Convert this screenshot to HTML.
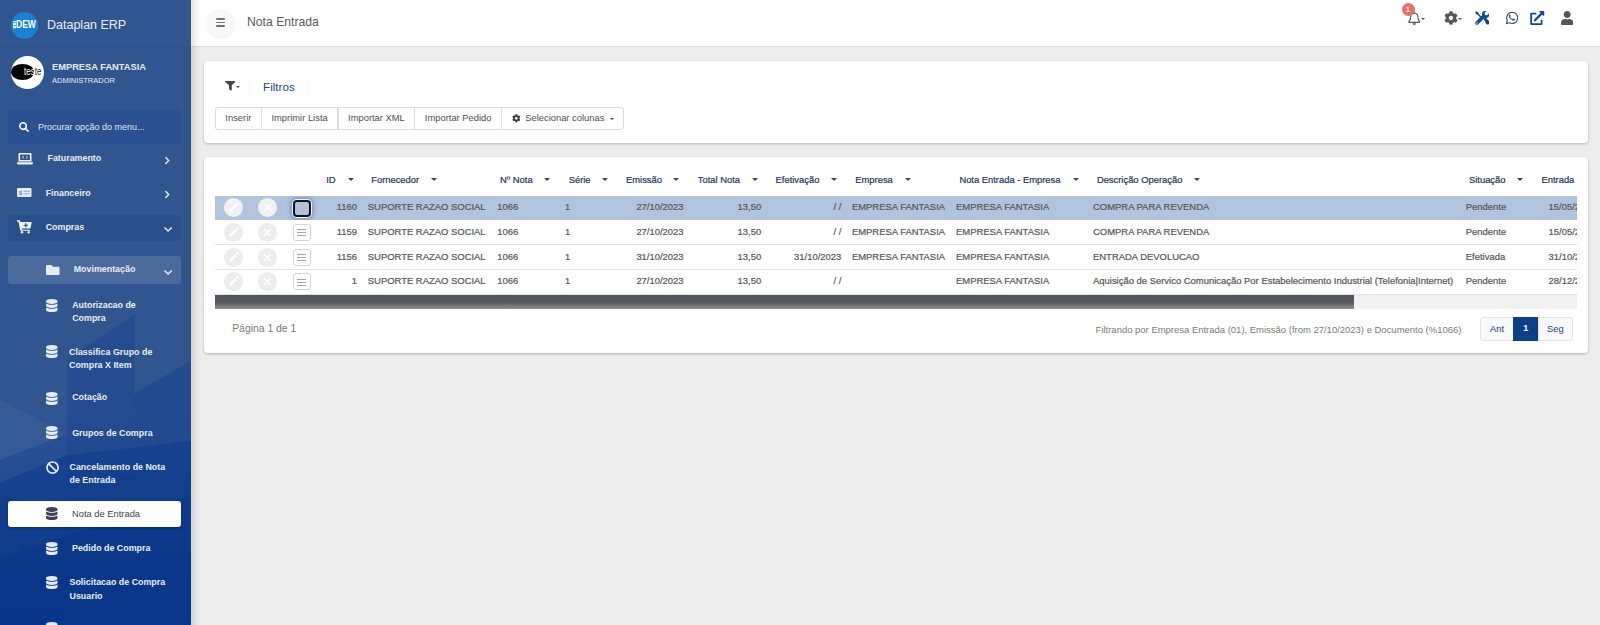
<!DOCTYPE html>
<html lang="pt-BR">
<head>
<meta charset="utf-8">
<title>Nota Entrada</title>
<style>
*{box-sizing:border-box;margin:0;padding:0}
html,body{width:1600px;height:625px;overflow:hidden;background:#ededed;font-family:"Liberation Sans",Arial,sans-serif;}
body{position:relative}
.abs{position:absolute}
#side{position:absolute;left:0;top:0;width:191px;height:625px;overflow:hidden;
 background:linear-gradient(180deg,#31568f 0%,#31568f 64%,#2c5395 74%,#1c4890 84%,#0d3b8b 94%,#09368a 100%);
 z-index:5;color:#eef2f8}
#sideshadow{position:absolute;left:191px;top:0;width:11px;height:625px;background:linear-gradient(90deg,rgba(0,0,0,.11),rgba(0,0,0,.04) 45%,rgba(0,0,0,0));z-index:6}
#side svg.bgshape{position:absolute;left:0;top:0;width:191px;height:625px}
#side .divider{position:absolute;left:0;top:46px;width:191px;height:1px;background:rgba(20,45,95,.16)}
.logo{position:absolute;left:11px;top:11.500px;width:27px;height:27px;border-radius:50%;background:#1b7fd4}
.logo span{position:absolute;left:5.200px;top:7.300px;font-size:10.300px;font-weight:bold;color:#fff;line-height:12px;transform:scaleX(.83);transform-origin:0 50%}
.logo i{position:absolute;left:1.500px;top:9.600px;width:3.600px;height:7.600px;background:repeating-linear-gradient(180deg,rgba(255,255,255,.95) 0 1px,rgba(255,255,255,.25) 1px 1.520px)}
.brand{position:absolute;left:47px;top:16px;font-size:12.500px;line-height:18px;color:#e8edf6;white-space:nowrap}
.avatar{position:absolute;left:11px;top:56px;width:33px;height:33px;border-radius:50%;background:#fff;overflow:hidden}
.avatar b{position:absolute;left:.2px;top:7.700px;width:23.300px;height:16.400px;border-radius:50%;background:#050505}
.avatar span{position:absolute;left:12.500px;top:10px;font-size:10px;line-height:12px;font-weight:normal;color:#fff;transform:scaleX(.8);transform-origin:0 50%}
.avatar span em{font-style:normal;color:#222}
.uname{position:absolute;left:52px;top:61px;font-size:9.300px;font-weight:bold;line-height:12px;color:#e6ebf4}
.urole{position:absolute;left:52px;top:74.500px;font-size:7.500px;line-height:11px;color:#e6ebf4}
.search{position:absolute;left:8px;top:110px;width:173px;height:34px;background:#2a5090;border-radius:3px}
.search span{position:absolute;left:30px;top:11px;font-size:9px;line-height:12px;color:#dfe6f1}
.mbg{position:absolute;left:8px;width:173px;border-radius:3px}
.t{position:absolute;font-size:8.900px;font-weight:bold;line-height:13.300px;color:#e9edf5;white-space:nowrap}
#top{position:absolute;left:191px;top:0;width:1409px;height:47px;background:#fff;border-bottom:1px solid #e0e0e0}
.hamb{position:absolute;left:16px;top:8.500px;width:28px;height:28px;border-radius:50%;background:#f8f8f8;box-shadow:0 1px 2px rgba(0,0,0,.08)}
.hamb i{position:absolute;left:9px;width:9px;height:1.800px;background:#707070;border-radius:1px}
.ptitle{position:absolute;left:56px;top:14px;font-size:12.200px;line-height:16px;color:#5a5a5a}
.card{position:absolute;left:204px;width:1384px;background:#fff;border-radius:4px;box-shadow:0 1px 3px rgba(0,0,0,.25)}
.btn{position:absolute;top:107px;height:22.500px;border:1px solid #dcdcdc;background:#fff;font-size:9.400px;line-height:20px;color:#4f4f4f;text-align:center;white-space:nowrap}
.th{position:absolute;top:172.600px;font-size:9.400px;line-height:13px;color:#1c3460;white-space:nowrap;-webkit-text-stroke:.2px #1c3460}
.ar{position:absolute;top:177.500px;width:0;height:0;border-left:3px solid transparent;border-right:3px solid transparent;border-top:3.500px solid #3a4558}
.row{position:absolute;left:215px;width:1361.500px;overflow:hidden}
.row.sel{background:#b0c4de}
.ln{position:absolute;left:215px;width:1361.500px;height:1px;background:#e4e4e4}
.c{position:absolute;top:5px;font-size:9.450px;line-height:13px;color:#585858;white-space:nowrap;-webkit-text-stroke:.22px #585858}
.circ{position:absolute;top:2.500px;width:19px;height:19px;border-radius:50%;background:#ececec}
.row.sel .circ{background:#f1f1f1}
.lst{position:absolute;left:77.500px;top:3.500px;width:18px;height:17px;border:1px solid #d4d4d4;border-radius:3px;background:#fff}
.lst i{position:absolute;left:3.500px;width:9px;height:1px;background:#a5a5a5}
.row.sel .lst{top:4.300px;border:2px solid #10131a;background:#b4c1d6;box-shadow:0 0 0 1px #f4f6fa,0 0 4px 2px rgba(40,70,130,.45);border-radius:4px}
.row.sel .lst i{display:none}
.pg{position:absolute;top:317px;height:24px;font-size:9.400px;line-height:21px;text-align:center;color:#1c3c6e;background:#f8f9fa;border:1px solid #e1e4e8}
</style>
</head>
<body>
<div id="side">
<svg class="bgshape" viewBox="0 0 191 625" preserveAspectRatio="none">
<polygon points="67,359 134.500,315 134.500,625 67,625" fill="#123f8c" opacity=".42"/>
<polygon points="134.500,393 191,361 191,625 134.500,625" fill="#123f8c" opacity=".45"/>
<polygon points="0,400 67,434.500 0,460" fill="#fff" opacity=".035"/>
<polygon points="0,460 67,434.500 67,625 0,625" fill="#123f8c" opacity=".22"/>
<polygon points="0,483 67,455 191,441 191,625 0,625" fill="#0b398a" opacity=".55"/>
<polygon points="0,558 191,495 191,625 0,625" fill="#08358a" opacity=".45"/>
</svg>
<div class="logo"><i></i><span>DEW</span></div>
<div class="brand">Dataplan ERP</div><div class="divider"></div>
<div class="avatar"><b></b><span>tes<em>te</em></span></div>
<div class="uname">EMPRESA FANTASIA</div><div class="urole">ADMINISTRADOR</div>
<div class="search"><svg class="abs" style="left:10.5px;top:12px;width:10px;height:10px" viewBox="0 0 512 512" preserveAspectRatio="xMidYMid meet"><path fill="#fff" d="M505 442.7L405.3 343c-4.500-4.500-10.600-7-17-7H372c27.600-35.300 44-79.700 44-128C416 93.100 322.900 0 208 0S0 93.100 0 208s93.100 208 208 208c48.300 0 92.700-16.400 128-44v16.300c0 6.400 2.500 12.500 7 17l99.700 99.700c9.400 9.400 24.600 9.400 33.900 0l28.300-28.300c9.400-9.400 9.400-24.600.1-34zM208 336c-70.700 0-128-57.200-128-128 0-70.700 57.200-128 128-128 70.700 0 128 57.200 128 128 0 70.700-57.200 128-128 128z"/></svg><span>Procurar opção do menu...</span></div>
<div class="mbg" style="top:215px;height:26px;background:rgba(20,60,130,.23)"></div>
<div class="mbg" style="top:256px;height:28px;background:rgba(255,255,255,.13)"></div>
<div class="mbg" style="top:501px;height:26px;background:#fff;box-shadow:0 1px 3px rgba(0,0,0,.3)"></div>
<svg class="abs" style="left:17px;top:152.500px;width:16px;height:12px" viewBox="0 0 16 12"><path fill="#eef2f8" d="M2.500 0h11c.6 0 1 .4 1 1v7.500h-13V1c0-.6.4-1 1-1zm.6 1.600v5.300h9.800V1.600zM0 9.300h16v.7c0 .8-.7 1.500-1.500 1.500h-13C.7 11.500 0 10.800 0 10z"/><path fill="none" stroke="#eef2f8" stroke-width=".9" d="M6.800 3l-1.300 1.300 1.300 1.300M9.200 3l1.300 1.300-1.300 1.300"/></svg>
<div class="t" style="left:47.5px;top:151.9px;">Faturamento</div>
<svg class="abs" style="left:164.2px;top:155.7px;width:6.5px;height:9px" viewBox="0 0 320 512" preserveAspectRatio="xMidYMid meet"><path fill="#e6ebf3" d="M285.476 272.971L91.132 467.314c-9.373 9.373-24.569 9.373-33.941 0l-22.667-22.667c-9.357-9.357-9.375-24.522-.04-33.901L188.505 256 34.484 101.255c-9.335-9.379-9.317-24.544.04-33.901l22.667-22.667c9.373-9.373 24.569-9.373 33.941 0L285.475 239.03c9.373 9.372 9.373 24.568.001 33.941z"/></svg>
<svg class="abs" style="left:17px;top:188px;width:14.500px;height:9.200px" viewBox="0 0 14.500 9.200"><rect x="0" y="0" width="14.500" height="9.200" rx="1.200" fill="#e6ebf3"/><text x="1.800" y="6.900" font-size="6.200" font-weight="bold" font-family="Liberation Sans, sans-serif" fill="#6d86b3">$</text><rect x="6.500" y="2.800" width="6.500" height=".9" fill="#8fa3c6"/><rect x="6.500" y="5.300" width="6.500" height=".9" fill="#8fa3c6"/></svg>
<div class="t" style="left:45.7px;top:186.9px;">Financeiro</div>
<svg class="abs" style="left:164.2px;top:189.7px;width:6.5px;height:9px" viewBox="0 0 320 512" preserveAspectRatio="xMidYMid meet"><path fill="#e6ebf3" d="M285.476 272.971L91.132 467.314c-9.373 9.373-24.569 9.373-33.941 0l-22.667-22.667c-9.357-9.357-9.375-24.522-.04-33.901L188.505 256 34.484 101.255c-9.335-9.379-9.317-24.544.04-33.901l22.667-22.667c9.373-9.373 24.569-9.373 33.941 0L285.475 239.03c9.373 9.372 9.373 24.568.001 33.941z"/></svg>
<svg class="abs" style="left:17px;top:220.300px;width:14.700px;height:13.700px" viewBox="0 0 15.500 14" preserveAspectRatio="none"><path fill="#eef2f8" d="M0 .3h2.600c.4 0 .7.3.8.600L3.600 2h11.200c.5 0 .8.400.7.900l-1.200 5.300c-.1.400-.4.600-.8.600H5l.2 1.100h8c.5 0 .8.400.7.900l-.1.300H4.100c-.4 0-.7-.3-.8-.600L1.600 1.900H0z"/><circle cx="5.300" cy="12.600" r="1.300" fill="#eef2f8"/><circle cx="12.300" cy="12.600" r="1.300" fill="#eef2f8"/><path fill="#2b5091" d="M8.700 3.200h1.300v1.600h1.600v1.200H10v1.600H8.700V6H7.100V4.800h1.600z"/></svg>
<div class="t" style="left:45.7px;top:221.4px;">Compras</div>
<svg class="abs" style="left:163.8px;top:224.2px;width:8.2px;height:10.9px" viewBox="0 0 448 512" preserveAspectRatio="xMidYMid meet"><path fill="#e6ebf3" d="M207.029 381.476L12.686 187.132c-9.373-9.373-9.373-24.569 0-33.941l22.667-22.667c9.357-9.357 24.522-9.375 33.901-.04L224 284.505l154.745-154.021c9.379-9.335 24.544-9.317 33.901.04l22.667 22.667c9.373 9.373 9.373 24.569 0 33.941L240.971 381.476c-9.373 9.372-24.569 9.372-33.942 0z"/></svg>
<svg class="abs" style="left:46px;top:262.5px;width:13.5px;height:14px" viewBox="0 0 512 512" preserveAspectRatio="xMidYMid meet"><path fill="#e6ebf3" d="M464 128H272l-64-64H48C21.49 64 0 85.49 0 112v288c0 26.51 21.49 48 48 48h416c26.51 0 48-21.49 48-48V176c0-26.51-21.49-48-48-48z"/></svg>
<div class="t" style="left:73.7px;top:262.9px;">Movimentação</div>
<svg class="abs" style="left:163.8px;top:266.7px;width:8.2px;height:10.9px" viewBox="0 0 448 512" preserveAspectRatio="xMidYMid meet"><path fill="#e6ebf3" d="M207.029 381.476L12.686 187.132c-9.373-9.373-9.373-24.569 0-33.941l22.667-22.667c9.357-9.357 24.522-9.375 33.901-.04L224 284.505l154.745-154.021c9.379-9.335 24.544-9.317 33.901.04l22.667 22.667c9.373 9.373 9.373 24.569 0 33.941L240.971 381.476c-9.373 9.372-24.569 9.372-33.942 0z"/></svg>
<svg class="abs" style="left:46.2px;top:298.8px;width:11.6px;height:13px" viewBox="0 0 448 512" preserveAspectRatio="xMidYMid meet"><path fill="#e6ebf3" d="M448 73.143v45.714C448 159.143 347.667 192 224 192S0 159.143 0 118.857V73.143C0 32.857 100.333 0 224 0s224 32.857 224 73.143zM448 176v102.857C448 319.143 347.667 352 224 352S0 319.143 0 278.857V176c48.125 33.143 136.208 48.572 224 48.572S399.874 209.143 448 176zm0 160v102.857C448 479.143 347.667 512 224 512S0 479.143 0 438.857V336c48.125 33.143 136.208 48.572 224 48.572S399.874 369.143 448 336z"/></svg>
<div class="t" style="left:72.2px;top:298.5px;">Autorizacao de<br>Compra</div>
<svg class="abs" style="left:46.2px;top:344.5px;width:11.6px;height:13px" viewBox="0 0 448 512" preserveAspectRatio="xMidYMid meet"><path fill="#e6ebf3" d="M448 73.143v45.714C448 159.143 347.667 192 224 192S0 159.143 0 118.857V73.143C0 32.857 100.333 0 224 0s224 32.857 224 73.143zM448 176v102.857C448 319.143 347.667 352 224 352S0 319.143 0 278.857V176c48.125 33.143 136.208 48.572 224 48.572S399.874 209.143 448 176zm0 160v102.857C448 479.143 347.667 512 224 512S0 479.143 0 438.857V336c48.125 33.143 136.208 48.572 224 48.572S399.874 369.143 448 336z"/></svg>
<div class="t" style="left:69px;top:345.6px;">Classifica Grupo de<br>Compra X Item</div>
<svg class="abs" style="left:46.2px;top:391.5px;width:11.6px;height:13px" viewBox="0 0 448 512" preserveAspectRatio="xMidYMid meet"><path fill="#e6ebf3" d="M448 73.143v45.714C448 159.143 347.667 192 224 192S0 159.143 0 118.857V73.143C0 32.857 100.333 0 224 0s224 32.857 224 73.143zM448 176v102.857C448 319.143 347.667 352 224 352S0 319.143 0 278.857V176c48.125 33.143 136.208 48.572 224 48.572S399.874 209.143 448 176zm0 160v102.857C448 479.143 347.667 512 224 512S0 479.143 0 438.857V336c48.125 33.143 136.208 48.572 224 48.572S399.874 369.143 448 336z"/></svg>
<div class="t" style="left:72.2px;top:391.4px;">Cotação</div>
<svg class="abs" style="left:46.2px;top:426.40000000000003px;width:11.6px;height:13px" viewBox="0 0 448 512" preserveAspectRatio="xMidYMid meet"><path fill="#e6ebf3" d="M448 73.143v45.714C448 159.143 347.667 192 224 192S0 159.143 0 118.857V73.143C0 32.857 100.333 0 224 0s224 32.857 224 73.143zM448 176v102.857C448 319.143 347.667 352 224 352S0 319.143 0 278.857V176c48.125 33.143 136.208 48.572 224 48.572S399.874 209.143 448 176zm0 160v102.857C448 479.143 347.667 512 224 512S0 479.143 0 438.857V336c48.125 33.143 136.208 48.572 224 48.572S399.874 369.143 448 336z"/></svg>
<div class="t" style="left:72.2px;top:426.5px;">Grupos de Compra</div>
<svg class="abs" style="left:45.9px;top:460.6px;width:13.2px;height:13.2px" viewBox="0 0 512 512" preserveAspectRatio="xMidYMid meet"><path fill="#e6ebf3" d="M256 8C119.034 8 8 119.033 8 256s111.034 248 248 248 248-111.034 248-248S392.967 8 256 8zm130.108 117.892c65.448 65.448 70 165.481 20.677 235.637L150.47 105.216c70.204-49.356 170.226-44.735 235.638 20.676zM125.892 386.108c-65.448-65.448-70-165.481-20.677-235.637L361.53 406.784c-70.203 49.356-170.226 44.736-235.638-20.676z"/></svg>
<div class="t" style="left:69.5px;top:460.5px;">Cancelamento de Nota<br>de Entrada</div>
<svg class="abs" style="left:46.2px;top:507.2px;width:11.6px;height:13px" viewBox="0 0 448 512" preserveAspectRatio="xMidYMid meet"><path fill="#3a4253" d="M448 73.143v45.714C448 159.143 347.667 192 224 192S0 159.143 0 118.857V73.143C0 32.857 100.333 0 224 0s224 32.857 224 73.143zM448 176v102.857C448 319.143 347.667 352 224 352S0 319.143 0 278.857V176c48.125 33.143 136.208 48.572 224 48.572S399.874 209.143 448 176zm0 160v102.857C448 479.143 347.667 512 224 512S0 479.143 0 438.857V336c48.125 33.143 136.208 48.572 224 48.572S399.874 369.143 448 336z"/></svg>
<div class="t" style="left:72px;top:508.0px;color:#3f4450;font-weight:normal;font-size:9.350px">Nota de Entrada</div>
<svg class="abs" style="left:46.2px;top:541.8px;width:11.6px;height:13px" viewBox="0 0 448 512" preserveAspectRatio="xMidYMid meet"><path fill="#e6ebf3" d="M448 73.143v45.714C448 159.143 347.667 192 224 192S0 159.143 0 118.857V73.143C0 32.857 100.333 0 224 0s224 32.857 224 73.143zM448 176v102.857C448 319.143 347.667 352 224 352S0 319.143 0 278.857V176c48.125 33.143 136.208 48.572 224 48.572S399.874 209.143 448 176zm0 160v102.857C448 479.143 347.667 512 224 512S0 479.143 0 438.857V336c48.125 33.143 136.208 48.572 224 48.572S399.874 369.143 448 336z"/></svg>
<div class="t" style="left:72px;top:541.6px;">Pedido de Compra</div>
<svg class="abs" style="left:46.2px;top:576.4px;width:11.6px;height:13px" viewBox="0 0 448 512" preserveAspectRatio="xMidYMid meet"><path fill="#e6ebf3" d="M448 73.143v45.714C448 159.143 347.667 192 224 192S0 159.143 0 118.857V73.143C0 32.857 100.333 0 224 0s224 32.857 224 73.143zM448 176v102.857C448 319.143 347.667 352 224 352S0 319.143 0 278.857V176c48.125 33.143 136.208 48.572 224 48.572S399.874 209.143 448 176zm0 160v102.857C448 479.143 347.667 512 224 512S0 479.143 0 438.857V336c48.125 33.143 136.208 48.572 224 48.572S399.874 369.143 448 336z"/></svg>
<div class="t" style="left:69.5px;top:576.3px;">Solicitacao de Compra<br>Usuario</div>
<svg class="abs" style="left:46.2px;top:622.3px;width:11.6px;height:13px" viewBox="0 0 448 512" preserveAspectRatio="xMidYMid meet"><path fill="#e6ebf3" d="M448 73.143v45.714C448 159.143 347.667 192 224 192S0 159.143 0 118.857V73.143C0 32.857 100.333 0 224 0s224 32.857 224 73.143zM448 176v102.857C448 319.143 347.667 352 224 352S0 319.143 0 278.857V176c48.125 33.143 136.208 48.572 224 48.572S399.874 209.143 448 176zm0 160v102.857C448 479.143 347.667 512 224 512S0 479.143 0 438.857V336c48.125 33.143 136.208 48.572 224 48.572S399.874 369.143 448 336z"/></svg>
</div><div id="sideshadow"></div>
<div id="top"><div class="hamb"><i style="top:9.800px"></i><i style="top:13.100px"></i><i style="top:16.400px"></i></div><div class="ptitle">Nota Entrada</div></div>
<svg class="abs" style="left:1407.500px;top:11.500px;width:12.500px;height:13.500px" viewBox="0 0 12.500 13.500"><path fill="none" stroke="#575757" stroke-width="1.150" stroke-linejoin="round" d="M6.250 1.200c-2.300 0-3.700 1.700-3.700 4 0 2.500-.9 3.600-1.700 4.400-.3.300-.1.800.3.800h10.200c.4 0 .6-.5.3-.8-.8-.8-1.700-1.900-1.700-4.400 0-2.300-1.400-4-3.700-4z"/><path fill="#575757" d="M4.600 11.300h3.300c0 .9-.7 1.700-1.650 1.700s-1.650-.8-1.650-1.700z"/><rect x="5.600" y="0" width="1.300" height="1.600" rx=".6" fill="#575757"/></svg>
<div class="abs" style="left:1420.500px;top:18px;width:0;height:0;border-left:2px solid transparent;border-right:2px solid transparent;border-top:2.500px solid #575757"></div>
<div class="abs" style="left:1401.500px;top:3.300px;width:13px;height:13px;border-radius:50%;background:#ee6b6b;color:#fff;font-size:8px;font-weight:bold;line-height:13px;text-align:center">1</div>
<svg class="abs" style="left:1443.5px;top:11px;width:14px;height:14px" viewBox="0 0 512 512" preserveAspectRatio="xMidYMid meet"><path fill="#575757" d="M487.4 315.7l-42.6-24.6c4.3-23.2 4.3-47 0-70.2l42.6-24.6c4.9-2.8 7.1-8.600 5.500-14-11.100-35.600-30-67.800-54.700-94.600-3.800-4.100-10-5.100-14.800-2.300L380.800 110c-17.900-15.400-38.500-27.300-60.800-35.100V25.800c0-5.600-3.900-10.500-9.400-11.700-36.700-8.200-74.300-7.800-109.200 0-5.500 1.200-9.400 6.100-9.400 11.700V75c-22.200 7.900-42.800 19.800-60.800 35.100L88.700 85.500c-4.900-2.800-11-1.900-14.800 2.300-24.700 26.700-43.600 58.900-54.700 94.600-1.700 5.400.6 11.200 5.500 14L67.300 221c-4.300 23.200-4.300 47 0 70.200l-42.600 24.600c-4.900 2.800-7.100 8.600-5.500 14 11.100 35.600 30 67.800 54.700 94.600 3.800 4.100 10 5.100 14.800 2.300l42.600-24.600c17.900 15.400 38.500 27.300 60.800 35.100v49.200c0 5.600 3.900 10.500 9.400 11.700 36.700 8.200 74.300 7.800 109.200 0 5.500-1.200 9.400-6.100 9.400-11.700v-49.200c22.200-7.900 42.800-19.800 60.800-35.100l42.600 24.600c4.900 2.800 11 1.900 14.800-2.300 24.700-26.700 43.600-58.900 54.700-94.600 1.500-5.500-.7-11.300-5.600-14.100zM256 336c-44.100 0-80-35.900-80-80s35.900-80 80-80 80 35.900 80 80-35.900 80-80 80z"/></svg>
<div class="abs" style="left:1458px;top:18px;width:0;height:0;border-left:2px solid transparent;border-right:2px solid transparent;border-top:2.500px solid #575757"></div>
<svg class="abs" style="left:1474.500px;top:11px;width:14.500px;height:14px" viewBox="0 0 14.500 14"><g fill="#0d4a94"><path d="M1.100.2L3.300 1.500 3.600 2.700 7.300 6.400 6.300 7.400 2.600 3.700 1.400 3.400.1 1.200z"/><path d="M8.300 7.300l1.500-1.500 4.300 4.300c.8.800.8 2 0 2.800-.8.800-2 .8-2.800 0z"/><path d="M14.300 2.300c.4 1.300.1 2.700-.9 3.700-1 1-2.500 1.300-3.700.8L3.300 13.300c-.7.700-1.900.7-2.600 0-.7-.7-.7-1.900 0-2.600L7.200 4.200c-.4-1.300-.1-2.700.9-3.700C9.100-.4 10.500-.7 11.800-.3L9.600 1.900l.4 2 2 .4z"/></g><circle cx="2" cy="12" r=".7" fill="#fff"/></svg>
<svg class="abs" style="left:1504.500px;top:11px;width:14px;height:14px" viewBox="0 0 14 14"><path fill="none" stroke="#3b4a68" stroke-width="1.100" d="M7.200 1.200a5.600 5.600 0 0 0-4.850 8.400L1.500 12.600l3.100-.8A5.600 5.600 0 1 0 7.200 1.200z"/><path fill="#3b4a68" d="M5.300 4c-.2-.4-.4-.4-.6-.4-.5 0-1 .6-1 1.400 0 .8.600 1.700.9 2 .9 1.200 1.900 2 3.300 2.500.9.300 1.500.1 1.900-.4.300-.4.300-.8.200-.9-.1-.2-1.300-.7-1.500-.8-.2-.1-.4 0-.5.200-.3.400-.4.600-.7.500-1-.4-1.700-1-2.300-2-.1-.3.300-.5.500-.9.100-.2 0-.3 0-.4z"/></svg>
<svg class="abs" style="left:1530px;top:11px;width:14.5px;height:14px" viewBox="0 0 512 512" preserveAspectRatio="xMidYMid meet"><path fill="#0d4a94" d="M432 320H400a16 16 0 0 0-16 16V448H64V128H208a16 16 0 0 0 16-16V80a16 16 0 0 0-16-16H48A48 48 0 0 0 0 112V464a48 48 0 0 0 48 48H400a48 48 0 0 0 48-48V336A16 16 0 0 0 432 320ZM488 0h-128c-21.37 0-32.05 25.910-17 41l35.730 35.730L135 320.370a24 24 0 0 0 0 34L157.670 377a24 24 0 0 0 34 0L435.280 133.320 471 169c15 15 41 4.500 41-17V24A24 24 0 0 0 488 0Z"/></svg>
<svg class="abs" style="left:1560.7px;top:11px;width:12.3px;height:14px" viewBox="0 0 448 512" preserveAspectRatio="xMidYMid meet"><path fill="#575757" d="M224 256c70.7 0 128-57.300 128-128S294.700 0 224 0 96 57.300 96 128s57.300 128 128 128zm89.600 32h-16.700c-22.200 10.200-46.900 16-72.900 16s-50.600-5.800-72.900-16h-16.700C60.200 288 0 348.200 0 422.400V464c0 26.500 21.500 48 48 48h352c26.500 0 48-21.500 48-48v-41.600c0-74.200-60.200-134.400-134.400-134.400z"/></svg>
<div class="card" style="top:61px;height:81.500px"></div>
<div class="abs" style="left:250px;top:72px;width:58px;height:31px;border-radius:4px;box-shadow:0 1px 4px rgba(0,0,0,.03)"></div>
<svg class="abs" style="left:224.7px;top:81.3px;width:10.8px;height:9.6px" viewBox="0 0 512 512" preserveAspectRatio="none"><path fill="#454545" d="M487.976 0H24.028C2.71 0-8.047 25.866 7.058 40.971L192 225.941V432c0 7.831 3.821 15.17 10.237 19.662l80 55.98C298.02 518.69 320 507.493 320 487.98V225.941l184.947-184.97C520.021 25.896 509.338 0 487.976 0z"/></svg>
<div class="abs" style="left:235.700px;top:85.700px;width:0;height:0;border-left:2px solid transparent;border-right:2px solid transparent;border-top:2.300px solid #454545"></div>
<div class="abs" style="left:263px;top:79px;font-size:11.700px;line-height:15px;color:#1c477d">Filtros</div>
<div class="btn" style="left:215px;width:46.7px;border-radius:3px 0 0 3px;">Inserir</div>
<div class="btn" style="left:260.7px;width:77.8px;">Imprimir Lista</div>
<div class="btn" style="left:337.5px;width:77.9px;">Importar XML</div>
<div class="btn" style="left:414.4px;width:87.6px;">Importar Pedido</div>
<div class="btn" style="left:501px;width:122.5px;border-radius:0 3px 3px 0;text-align:left;padding-left:23.200px">Selecionar colunas</div>
<svg class="abs" style="left:511.8px;top:114.3px;width:8.6px;height:8.6px" viewBox="0 0 512 512" preserveAspectRatio="xMidYMid meet"><path fill="#3d3d3d" d="M487.4 315.7l-42.6-24.6c4.3-23.2 4.3-47 0-70.2l42.6-24.6c4.9-2.8 7.1-8.600 5.500-14-11.100-35.600-30-67.800-54.700-94.600-3.800-4.100-10-5.100-14.800-2.300L380.800 110c-17.900-15.400-38.500-27.300-60.800-35.100V25.800c0-5.600-3.900-10.500-9.400-11.700-36.700-8.200-74.300-7.800-109.200 0-5.500 1.200-9.400 6.100-9.400 11.700V75c-22.200 7.900-42.800 19.800-60.800 35.100L88.700 85.500c-4.900-2.800-11-1.900-14.800 2.300-24.700 26.700-43.600 58.900-54.700 94.600-1.700 5.400.6 11.200 5.500 14L67.300 221c-4.300 23.200-4.300 47 0 70.200l-42.600 24.600c-4.900 2.800-7.100 8.600-5.500 14 11.100 35.600 30 67.800 54.700 94.600 3.800 4.100 10 5.100 14.800 2.300l42.600-24.600c17.900 15.400 38.500 27.300 60.800 35.100v49.200c0 5.600 3.900 10.500 9.400 11.700 36.700 8.200 74.300 7.800 109.200 0 5.500-1.200 9.400-6.100 9.400-11.700v-49.200c22.200-7.900 42.800-19.800 60.800-35.100l42.600 24.600c4.900 2.800 11 1.900 14.800-2.300 24.700-26.700 43.600-58.900 54.700-94.600 1.500-5.500-.7-11.300-5.600-14.100zM256 336c-44.100 0-80-35.900-80-80s35.900-80 80-80 80 35.900 80 80-35.900 80-80 80z"/></svg>
<div class="abs" style="left:609.500px;top:118px;width:0;height:0;border-left:2.300px solid transparent;border-right:2.300px solid transparent;border-top:2.500px solid #4a4a4a"></div>
<div class="card" style="top:156.500px;height:196px"></div>
<div class="th" style="left:326.2px">ID</div>
<div class="ar" style="left:347.5px"></div>
<div class="th" style="left:371.2px">Fornecedor</div>
<div class="ar" style="left:431.2px"></div>
<div class="th" style="left:500px">Nº Nota</div>
<div class="ar" style="left:544.4px"></div>
<div class="th" style="left:568.7px">Série</div>
<div class="ar" style="left:602px"></div>
<div class="th" style="left:626px">Emissão</div>
<div class="ar" style="left:673.4px"></div>
<div class="th" style="left:697.8px">Total Nota</div>
<div class="ar" style="left:751.5px"></div>
<div class="th" style="left:775.6px">Efetivação</div>
<div class="ar" style="left:831px"></div>
<div class="th" style="left:855.3px">Empresa</div>
<div class="ar" style="left:904.7px"></div>
<div class="th" style="left:959.4px">Nota Entrada - Empresa</div>
<div class="ar" style="left:1072.8px"></div>
<div class="th" style="left:1096.9px">Descrição Operação</div>
<div class="ar" style="left:1194.4px"></div>
<div class="th" style="left:1469px">Situação</div>
<div class="ar" style="left:1517px"></div>
<div class="th" style="left:1541.5px">Entrada</div>
<div class="row sel" style="top:195.7px;height:24px">
<div class="circ" style="left:8.800px"><svg class="abs" style="left:0;top:0;width:19px;height:19px" viewBox="0 0 19 19"><path fill="#fff" d="M5.200 13.800l.5-2.500 5.800-5.800 2 2-5.800 5.800zM12.200 4.800l.8-.8c.3-.3.800-.3 1.100 0l.9.900c.3.300.3.800 0 1.100l-.8.800z"/></svg></div><div class="circ" style="left:42.800px"><svg class="abs" style="left:0;top:0;width:19px;height:19px" viewBox="0 0 19 19"><path stroke="#fff" stroke-width="1.700" stroke-linecap="round" d="M6.700 6.700l5.600 5.600M12.300 6.700l-5.600 5.600"/></svg></div>
<div class="lst"><i style="top:4.500px"></i><i style="top:7.500px"></i><i style="top:10.500px"></i></div>
<div class="c" style="right:1219.5px;top:4.3px">1160</div><div class="c" style="left:152.8px;top:4.3px">SUPORTE RAZAO SOCIAL</div><div class="c" style="left:282.2px;top:4.3px">1066</div><div class="c" style="left:350.0px;top:4.3px">1</div><div class="c" style="right:892.9px;top:4.3px">27/10/2023</div><div class="c" style="right:815.3px;top:4.3px">13,50</div><div class="c" style="right:735.2px;top:4.3px">/ /</div><div class="c" style="left:636.9px;top:4.3px">EMPRESA FANTASIA</div><div class="c" style="left:741.0px;top:4.3px">EMPRESA FANTASIA</div><div class="c" style="left:878.0px;top:4.3px">COMPRA PARA REVENDA</div><div class="c" style="left:1250.8px;top:4.3px">Pendente</div><div class="c" style="left:1333.6px;top:4.3px">15/05/2024</div>
</div>
<div class="row" style="top:220.4px;height:24px">
<div class="circ" style="left:8.800px"><svg class="abs" style="left:0;top:0;width:19px;height:19px" viewBox="0 0 19 19"><path fill="#fff" d="M5.200 13.800l.5-2.500 5.800-5.800 2 2-5.800 5.800zM12.200 4.800l.8-.8c.3-.3.800-.3 1.100 0l.9.900c.3.300.3.800 0 1.100l-.8.800z"/></svg></div><div class="circ" style="left:42.800px"><svg class="abs" style="left:0;top:0;width:19px;height:19px" viewBox="0 0 19 19"><path stroke="#fff" stroke-width="1.700" stroke-linecap="round" d="M6.700 6.700l5.600 5.600M12.300 6.700l-5.600 5.600"/></svg></div>
<div class="lst"><i style="top:4.500px"></i><i style="top:7.500px"></i><i style="top:10.500px"></i></div>
<div class="c" style="right:1219.5px;top:4.6px">1159</div><div class="c" style="left:152.8px;top:4.6px">SUPORTE RAZAO SOCIAL</div><div class="c" style="left:282.2px;top:4.6px">1066</div><div class="c" style="left:350.0px;top:4.6px">1</div><div class="c" style="right:892.9px;top:4.6px">27/10/2023</div><div class="c" style="right:815.3px;top:4.6px">13,50</div><div class="c" style="right:735.2px;top:4.6px">/ /</div><div class="c" style="left:636.9px;top:4.6px">EMPRESA FANTASIA</div><div class="c" style="left:741.0px;top:4.6px">EMPRESA FANTASIA</div><div class="c" style="left:878.0px;top:4.6px">COMPRA PARA REVENDA</div><div class="c" style="left:1250.8px;top:4.6px">Pendente</div><div class="c" style="left:1333.6px;top:4.6px">15/05/2024</div>
</div>
<div class="row" style="top:245.1px;height:24px">
<div class="circ" style="left:8.800px"><svg class="abs" style="left:0;top:0;width:19px;height:19px" viewBox="0 0 19 19"><path fill="#fff" d="M5.200 13.800l.5-2.500 5.800-5.800 2 2-5.800 5.800zM12.200 4.800l.8-.8c.3-.3.800-.3 1.100 0l.9.900c.3.300.3.800 0 1.100l-.8.800z"/></svg></div><div class="circ" style="left:42.800px"><svg class="abs" style="left:0;top:0;width:19px;height:19px" viewBox="0 0 19 19"><path stroke="#fff" stroke-width="1.700" stroke-linecap="round" d="M6.700 6.700l5.600 5.600M12.300 6.700l-5.600 5.600"/></svg></div>
<div class="lst"><i style="top:4.500px"></i><i style="top:7.500px"></i><i style="top:10.500px"></i></div>
<div class="c" style="right:1219.5px;top:4.9px">1156</div><div class="c" style="left:152.8px;top:4.9px">SUPORTE RAZAO SOCIAL</div><div class="c" style="left:282.2px;top:4.9px">1066</div><div class="c" style="left:350.0px;top:4.9px">1</div><div class="c" style="right:892.9px;top:4.9px">31/10/2023</div><div class="c" style="right:815.3px;top:4.9px">13,50</div><div class="c" style="right:735.2px;top:4.9px">31/10/2023</div><div class="c" style="left:636.9px;top:4.9px">EMPRESA FANTASIA</div><div class="c" style="left:741.0px;top:4.9px">EMPRESA FANTASIA</div><div class="c" style="left:878.0px;top:4.9px">ENTRADA DEVOLUCAO</div><div class="c" style="left:1250.8px;top:4.9px">Efetivada</div><div class="c" style="left:1333.6px;top:4.9px">31/10/2023</div>
</div>
<div class="row" style="top:269.8px;height:24px">
<div class="circ" style="left:8.800px"><svg class="abs" style="left:0;top:0;width:19px;height:19px" viewBox="0 0 19 19"><path fill="#fff" d="M5.200 13.800l.5-2.500 5.800-5.800 2 2-5.800 5.800zM12.200 4.800l.8-.8c.3-.3.800-.3 1.100 0l.9.900c.3.300.3.800 0 1.100l-.8.800z"/></svg></div><div class="circ" style="left:42.800px"><svg class="abs" style="left:0;top:0;width:19px;height:19px" viewBox="0 0 19 19"><path stroke="#fff" stroke-width="1.700" stroke-linecap="round" d="M6.700 6.700l5.600 5.600M12.300 6.700l-5.600 5.600"/></svg></div>
<div class="lst"><i style="top:4.500px"></i><i style="top:7.500px"></i><i style="top:10.500px"></i></div>
<div class="c" style="right:1219.5px;top:4.2px">1</div><div class="c" style="left:152.8px;top:4.2px">SUPORTE RAZAO SOCIAL</div><div class="c" style="left:282.2px;top:4.2px">1066</div><div class="c" style="left:350.0px;top:4.2px">1</div><div class="c" style="right:892.9px;top:4.2px">27/10/2023</div><div class="c" style="right:815.3px;top:4.2px">13,50</div><div class="c" style="right:735.2px;top:4.2px">/ /</div><div class="c" style="left:636.9px;top:4.2px"></div><div class="c" style="left:741.0px;top:4.2px">EMPRESA FANTASIA</div><div class="c" style="left:878.0px;top:4.2px">Aquisição de Servico Comunicação Por Estabelecimento Industrial (Telefonia|Internet)</div><div class="c" style="left:1250.8px;top:4.2px">Pendente</div><div class="c" style="left:1333.6px;top:4.2px">28/12/2023</div>
</div>
<div class="ln" style="top:244px"></div>
<div class="ln" style="top:269px"></div>
<div class="ln" style="top:294px"></div>
<div class="abs" style="left:215px;top:295px;width:1361.500px;height:14px;background:#f1f1f1"></div>
<div class="abs" style="left:215px;top:295px;width:1139px;height:14px;background:linear-gradient(180deg,#50555a 0%,#585c60 55%,#8d9093 100%)"></div>
<div class="abs" style="left:232.200px;top:322px;font-size:10.400px;line-height:14px;color:#7a7a7a">Página 1 de 1</div>
<div class="abs" style="left:1095.600px;top:323px;font-size:9.470px;line-height:13px;color:#7a7a7a;white-space:nowrap">Filtrando por Empresa Entrada (01), Emissão (from 27/10/2023) e Documento (%1066)</div>
<div class="pg" style="left:1480.400px;width:33.300px;border-radius:3px 0 0 3px">Ant</div>
<div class="pg" style="left:1513.200px;width:25px;background:#0d3f86;border-color:#0d3f86;color:#fff;font-weight:bold;font-size:9px">1</div>
<div class="pg" style="left:1537.800px;width:35px;border-radius:0 3px 3px 0">Seg</div>
</body>
</html>
